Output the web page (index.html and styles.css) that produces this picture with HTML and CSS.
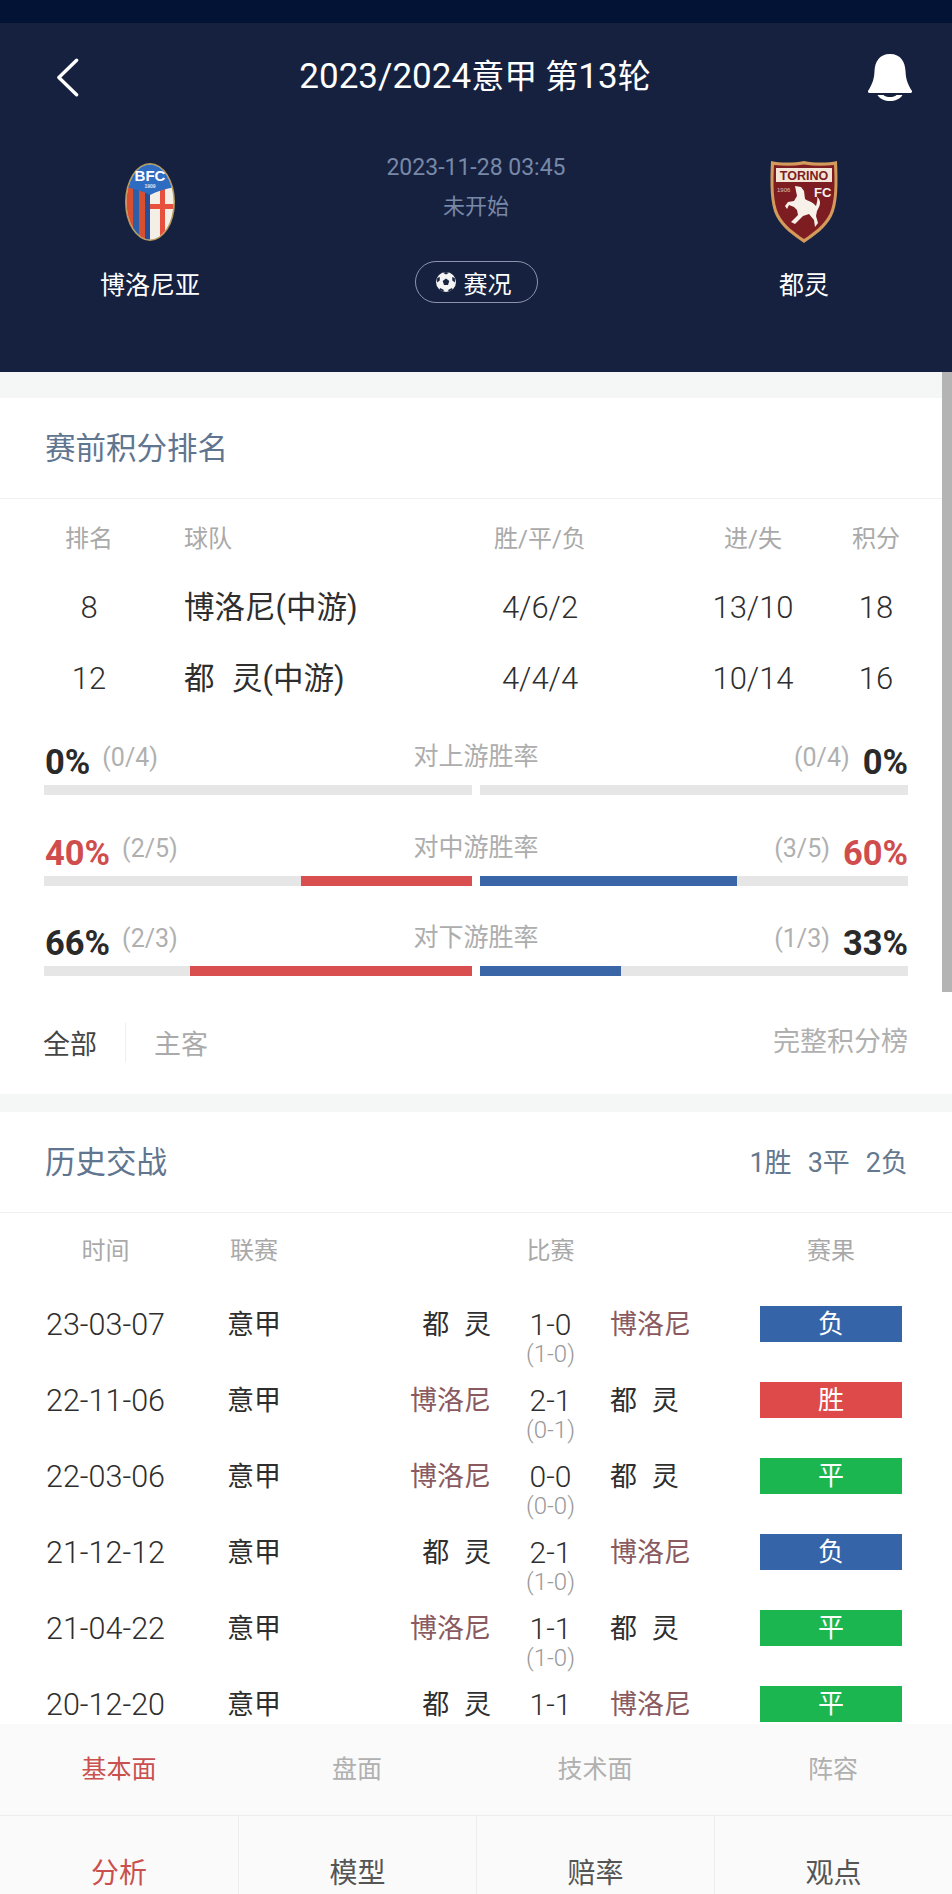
FILE: index.html
```html
<!DOCTYPE html>
<html lang="zh-CN">
<head>
<meta charset="utf-8">
<title>2023/2024意甲 第13轮</title>
<link rel="stylesheet" href="styles.css">
</head>
<body>
<div class="app">
  <div class="status"></div>
  <header class="hero">
    <div class="nav">
      <svg class="back" viewBox="0 0 24 40"><path d="M21.5 2 L3 20 L21.5 38" /></svg>
      <h1 class="title"><span class="num">2023/2024</span>意甲 第<span class="num">13</span>轮</h1>
      <svg class="bell" viewBox="0 0 44 47"><path d="M22 0C11 0 7 8 6.5 17C6.200 24 5 29 0 37C-.5 38 .5 39 2 39H42C43.500 39 44.500 38 44 37C39 29 37.800 24 37.500 17C37 8 33 0 22 0Z"/><path d="M9.500 41C12 45 17 47 22 47C27 47 32 45 34.500 41H28.500C27 42.500 25 43 22 43C19 43 17 42.500 15.500 41Z"/></svg>
    </div>
    <div class="match">
      <div class="team">
        <svg class="crest crest-b" viewBox="0 0 50 78">
          <defs><clipPath id="oval"><ellipse cx="25" cy="39" rx="23.500" ry="37.500"/></clipPath></defs>
          <ellipse cx="25" cy="39" rx="25" ry="39" fill="#b89a5c"/>
          <g clip-path="url(#oval)">
            <rect width="50" height="78" fill="#f3efe6"/>
            <rect x="0" y="22" width="8" height="56" fill="#d8502f"/>
            <rect x="8" y="22" width="6" height="56" fill="#2f5ea8"/>
            <rect x="14" y="22" width="6" height="56" fill="#d8502f"/>
            <rect x="20" y="22" width="5" height="56" fill="#264f98"/>
            <rect x="35" y="22" width="5" height="56" fill="#e8503e"/>
            <rect x="25" y="41" width="25" height="5" fill="#e8503e"/>
            <path d="M0 0H50V24C40 26 32 28 25 32C18 28 10 26 0 24Z" fill="#2d6cc0"/>
          </g>
          <text class="crest-b-text" x="25" y="18" text-anchor="middle">BFC</text>
          <text class="crest-b-year" x="25" y="25" text-anchor="middle">1909</text>
        </svg>
        <div class="team-name">博洛尼亚</div>
      </div>
      <div class="info">
        <div class="when">2023-11-28 03:45</div>
        <div class="state">未开始</div>
        <div class="pill">
          <svg class="ball" viewBox="0 0 20 20"><circle cx="10" cy="10" r="10" fill="#f4f4f4"/><path d="M10 6.500 13.300 9 12 13H8L6.700 9Z" fill="#1a2340"/><path d="M7 .7 10 2.500 13 .7 10 0ZM1.200 6 1 10.500 3.700 8.500 3.800 5ZM18.800 6 19 10.500 16.300 8.500 16.200 5ZM4 16 8 18 7 19.500 3.500 17.500ZM16 16 12 18 13 19.500 16.500 17.500Z" fill="#1a2340"/></svg>
          <span>赛况</span>
        </div>
      </div>
      <div class="team">
        <svg class="crest crest-t" viewBox="0 0 68 83">
          <path d="M1 1C10 3 24 3 34 1C44 3 58 3 67 1C68 24 68 44 62 56C56 68 44 76 34 83C24 76 12 68 6 56C0 44 0 24 1 1Z" fill="#d39a5c"/>
          <path d="M4 5C14 6 24 6 34 4.500C44 6 54 6 64 5C65 24 65 42 59.500 54C54 65 43 73 34 79C25 73 14 65 8.500 54C3 42 3 24 4 5Z" fill="#7d1d22"/>
          <rect x="6" y="8" width="56" height="14" fill="#f3e6d6"/>
          <text class="crest-t-name" x="34" y="20" text-anchor="middle">TORINO</text>
          <text class="crest-t-year" x="7" y="32">1906</text>
          <text class="crest-t-fc" x="44" y="37">FC</text>
          <path d="M25 26L31 27L34 31L35 39C38 41 43 42 46 46C47 42 48 39 47 37C50 39 51 43 49 47L47 51L46 56L48 63L45 67L44 60L39 54L33 56L25 64L21 62L28 55L27 50L24 47L19 45L17 49L15 46L18 42L24 41L27 36Z" fill="#f7f1ea"/>
        </svg>
        <div class="team-name">都灵</div>
      </div>
    </div>
  </header>

  <main class="scroll">
    <div class="gap gap-top"></div>
    <section class="card">
      <div class="card-head"><h2>赛前积分排名</h2></div>
      <div class="stand stand-head">
        <span class="c">排名</span><span class="club-cell">球队</span><span class="c">胜/平/负</span><span class="c">进/失</span><span class="c">积分</span>
      </div>
      <div class="stand stand-row">
        <span class="c big">8</span><span class="club-cell club">博洛尼(中游)</span><span class="c big">4/6/2</span><span class="c big">13/10</span><span class="c big">18</span>
      </div>
      <div class="stand stand-row">
        <span class="c big">12</span><span class="club-cell club">都 灵(中游)</span><span class="c big">4/4/4</span><span class="c big">10/14</span><span class="c big">16</span>
      </div>

      <div class="rates">
        <div class="rate">
          <div class="rate-top">
            <div class="side"><b class="pct">0%</b><span class="frac">(0/4)</span></div>
            <div class="rate-label">对上游胜率</div>
            <div class="side side-r"><span class="frac">(0/4)</span><b class="pct">0%</b></div>
          </div>
          <div class="bars">
            <div class="bar bar-l"><i class="fill red" style="width:0%"></i></div>
            <div class="bar"><i class="fill blue" style="width:0%"></i></div>
          </div>
        </div>
        <div class="rate">
          <div class="rate-top">
            <div class="side"><b class="pct hot">40%</b><span class="frac">(2/5)</span></div>
            <div class="rate-label">对中游胜率</div>
            <div class="side side-r"><span class="frac">(3/5)</span><b class="pct hot">60%</b></div>
          </div>
          <div class="bars">
            <div class="bar bar-l"><i class="fill red" style="width:40%"></i></div>
            <div class="bar"><i class="fill blue" style="width:60%"></i></div>
          </div>
        </div>
        <div class="rate">
          <div class="rate-top">
            <div class="side"><b class="pct">66%</b><span class="frac">(2/3)</span></div>
            <div class="rate-label">对下游胜率</div>
            <div class="side side-r"><span class="frac">(1/3)</span><b class="pct">33%</b></div>
          </div>
          <div class="bars">
            <div class="bar bar-l"><i class="fill red" style="width:66%"></i></div>
            <div class="bar"><i class="fill blue" style="width:33%"></i></div>
          </div>
        </div>
      </div>

      <div class="card-foot">
        <div class="switch"><span class="on">全部</span><span class="off">主客</span></div>
        <div class="more">完整积分榜</div>
      </div>
    </section>
    <div class="gap gap-mid"></div>
    <section class="card">
      <div class="card-head card-head-split"><h2>历史交战</h2><div class="tally"><span>1胜</span><span>3平</span><span>2负</span></div></div>
      <div class="hist hist-head">
        <span class="d">时间</span><span class="l">联赛</span><span class="s">比赛</span><span class="r">赛果</span>
      </div>
      <div class="hist hist-row">
        <span class="d date">23-03-07</span><span class="l">意甲</span><span class="h">都 灵</span>
        <span class="s"><span class="score">1-0</span><span class="half">(1-0)</span></span>
        <span class="a self">博洛尼</span><span class="r res lose">负</span>
      </div>
      <div class="hist hist-row">
        <span class="d date">22-11-06</span><span class="l">意甲</span><span class="h self">博洛尼</span>
        <span class="s"><span class="score">2-1</span><span class="half">(0-1)</span></span>
        <span class="a">都 灵</span><span class="r res win">胜</span>
      </div>
      <div class="hist hist-row">
        <span class="d date">22-03-06</span><span class="l">意甲</span><span class="h self">博洛尼</span>
        <span class="s"><span class="score">0-0</span><span class="half">(0-0)</span></span>
        <span class="a">都 灵</span><span class="r res draw">平</span>
      </div>
      <div class="hist hist-row">
        <span class="d date">21-12-12</span><span class="l">意甲</span><span class="h">都 灵</span>
        <span class="s"><span class="score">2-1</span><span class="half">(1-0)</span></span>
        <span class="a self">博洛尼</span><span class="r res lose">负</span>
      </div>
      <div class="hist hist-row">
        <span class="d date">21-04-22</span><span class="l">意甲</span><span class="h self">博洛尼</span>
        <span class="s"><span class="score">1-1</span><span class="half">(1-0)</span></span>
        <span class="a">都 灵</span><span class="r res draw">平</span>
      </div>
      <div class="hist hist-row">
        <span class="d date">20-12-20</span><span class="l">意甲</span><span class="h">都 灵</span>
        <span class="s"><span class="score">1-1</span></span>
        <span class="a self">博洛尼</span><span class="r res draw">平</span>
      </div>
    </section>
  </main>

  <footer class="tabs">
    <nav class="subtabs"><span class="active">基本面</span><span>盘面</span><span>技术面</span><span>阵容</span></nav>
    <nav class="maintabs"><span class="active">分析</span><span>模型</span><span>赔率</span><span>观点</span></nav>
  </footer>
  <div class="scrollbar"></div>
</div>
</body>
</html>
```

FILE: styles.css
```css
* { box-sizing: border-box; margin: 0; padding: 0; }
html, body { width: 952px; height: 1894px; overflow: hidden; background: #fff; }
body {
  font-family: Roboto, "Noto Sans CJK SC", sans-serif;
  font-weight: 400;
  color: #2e2e2e;
}
.app { position: relative; display: flex; flex-direction: column; width: 952px; height: 1894px; }

/* header */
.status { flex: none; height: 23px; background: #021336; }
.hero { flex: none; height: 349px; background: #16213f; color: #fff; }
.nav { display: flex; align-items: center; justify-content: space-between; height: 108px; padding: 0 40px 0 56px; }
.back { width: 23px; height: 39px; fill: none; stroke: #fff; stroke-width: 3.500; stroke-linecap: round; stroke-linejoin: round; }
.bell { width: 44px; height: 47px; fill: #fff; }
.title { font-size: 33px; font-weight: 400; line-height: 40px; margin-left: 3px; white-space: nowrap; }
.num { font-size: 35px; }
.match { display: grid; grid-template-columns: 300px 352px 304px; height: 241px; }
.team { display: flex; flex-direction: column; align-items: center; }
.crest { display: block; flex: none; }
.crest-b { width: 50px; height: 78px; margin-top: 32px; }
.crest-t { width: 68px; height: 83px; margin-top: 29px; }
.crest-b-text { font: 700 15px "Liberation Sans", sans-serif; fill: #fff; }
.crest-b-year { font: 700 5px "Liberation Sans", sans-serif; fill: #dfe9f5; }
.crest-t-name { font: 700 12.500px "Liberation Sans", sans-serif; fill: #7d1d22; }
.crest-t-year { font: 400 6px "Liberation Sans", sans-serif; fill: #e0c0b0; }
.crest-t-fc { font: 700 13px "Liberation Sans", sans-serif; fill: #f7f1ea; }
.team-name { font-size: 25px; line-height: 34px; margin-top: 28px; }
.crest-t + .team-name { margin-top: 26px; }
.info { display: flex; flex-direction: column; align-items: center; padding-top: 22px; color: #7888a8; }
.when { font-size: 23px; line-height: 30px; white-space: nowrap; }
.state { font-size: 22px; line-height: 30px; margin-top: 9px; }
.pill { display: flex; align-items: center; gap: 8px; width: 123px; height: 42px; margin-top: 39px; padding-left: 20px; border: 1.500px solid #8c95ad; border-radius: 21px; color: #fff; font-size: 24px; }
.ball { width: 20px; height: 20px; flex: none; }

/* body */
.scroll { flex: 1; min-height: 0; overflow: hidden; background: #fff; }
.gap { background: #f5f6f6; }
.gap-top { height: 26px; }
.gap-mid { height: 18px; }
.card-head { display: flex; align-items: center; height: 101px; padding: 0 44px 4px 45px; border-bottom: 1.500px solid #f0f0f0; }
.card-head-split { justify-content: space-between; }
.card-head h2 { font-size: 30.500px; font-weight: 400; color: #60758f; }
.tally { display: flex; gap: 16px; font-size: 27px; color: #64788f; }

.stand { display: grid; grid-template-columns: 90px 286px 240px 186px 60px; align-items: center; padding-left: 44px; white-space: nowrap; }
.club-cell { padding-left: 50px; }
.c { text-align: center; }
.stand-head { height: 60px; margin-top: 7px; font-size: 24px; color: #a9a9a9; }
.stand-head + .stand-row { margin-top: 6px; }
.stand-row { height: 71px; font-size: 31px; font-weight: 300; }
.club { font-size: 30.500px; font-weight: 400; line-height: 34px; word-spacing: 10px; }

.rates { margin-top: 26px; }
.rate { height: 90.500px; padding: 0 44px; }
.rate-top { display: grid; grid-template-columns: 1fr 140px 1fr; align-items: center; height: 40px; margin-bottom: 5px; }
.side { display: flex; align-items: center; gap: 12px; }
.side-r { justify-content: flex-end; }
.pct { font-size: 34.500px; font-weight: 700; color: #2a2a2a; line-height: 40px; padding-top: 2px; margin-left: 1px; }
.pct.hot { color: #d04d4d; }
.frac { font-size: 25px; color: #b0b0b0; margin-top: -7px; }
.rate-label { font-size: 25px; line-height: 32px; text-align: center; color: #adadad; margin-top: -8px; }
.bars { display: grid; grid-template-columns: 428px 428px; column-gap: 8px; }
.bar { height: 10px; background: #e6e6e6; display: flex; }
.bar-l { justify-content: flex-end; }
.fill { display: block; height: 100%; }
.red { background: #d94f4f; }
.blue { background: #3a66a7; }

.card-foot { display: flex; justify-content: space-between; align-items: center; height: 40px; margin-top: 8px; margin-bottom: 34.500px; padding: 0 44px 0 43px; }
.switch { display: flex; align-items: center; font-size: 27px; margin-top: 5px; }
.switch .on { color: #444; padding-right: 28px; border-right: 1px solid #eee; }
.switch .off { color: #aaa; padding-left: 28px; }
.more { font-size: 27px; color: #b0b0b0; }

.hist { display: grid; grid-template-columns: 119px 62px 54px 210px 119px 150px 142px; padding-left: 46px; }
.d { grid-column: 1; }
.l { grid-column: 3; }
.h { grid-column: 4; text-align: right; }
.s { grid-column: 5; text-align: center; }
.a { grid-column: 6; }
.r { grid-column: 7; text-align: center; }
.hist-head { height: 60px; margin-top: 5px; margin-bottom: 29.500px; align-items: center; font-size: 24px; color: #a9a9a9; }
.hist-head span { text-align: center; white-space: nowrap; }
.hist-row { height: 76.200px; font-size: 27px; line-height: 34px; word-spacing: 8px; white-space: nowrap; }
.date { font-size: 30.500px; font-weight: 300; word-spacing: 0; }
.self { color: #8a5a60; }
.score { display: block; font-size: 30px; font-weight: 300; }
.half { display: block; font-size: 24px; font-weight: 300; line-height: 24px; color: #999; }
.res { height: 36px; line-height: 36px; margin-top: -2px; color: #fff; font-size: 26px; }
.lose { background: #3565a8; }
.win { background: #de4a4a; }
.draw { background: #1bb650; }

/* bottom */
.tabs { flex: none; height: 170px; background: #fafafa; font-size: 25px; text-align: center; }
.subtabs, .maintabs { display: grid; grid-template-columns: repeat(4, 238px); }
.subtabs { height: 92px; border-bottom: 1px solid #ededed; line-height: 91px; color: #b0b0b0; }
.maintabs { height: 78px; font-size: 28px; line-height: 116px; color: #555; overflow: hidden; }
.maintabs span + span { border-left: 1px solid #ededed; }
.tabs .active { color: #c9504f; }

.scrollbar { position: absolute; top: 372px; right: 0; width: 10px; height: 620px; background: #b4b4b4; }
```
